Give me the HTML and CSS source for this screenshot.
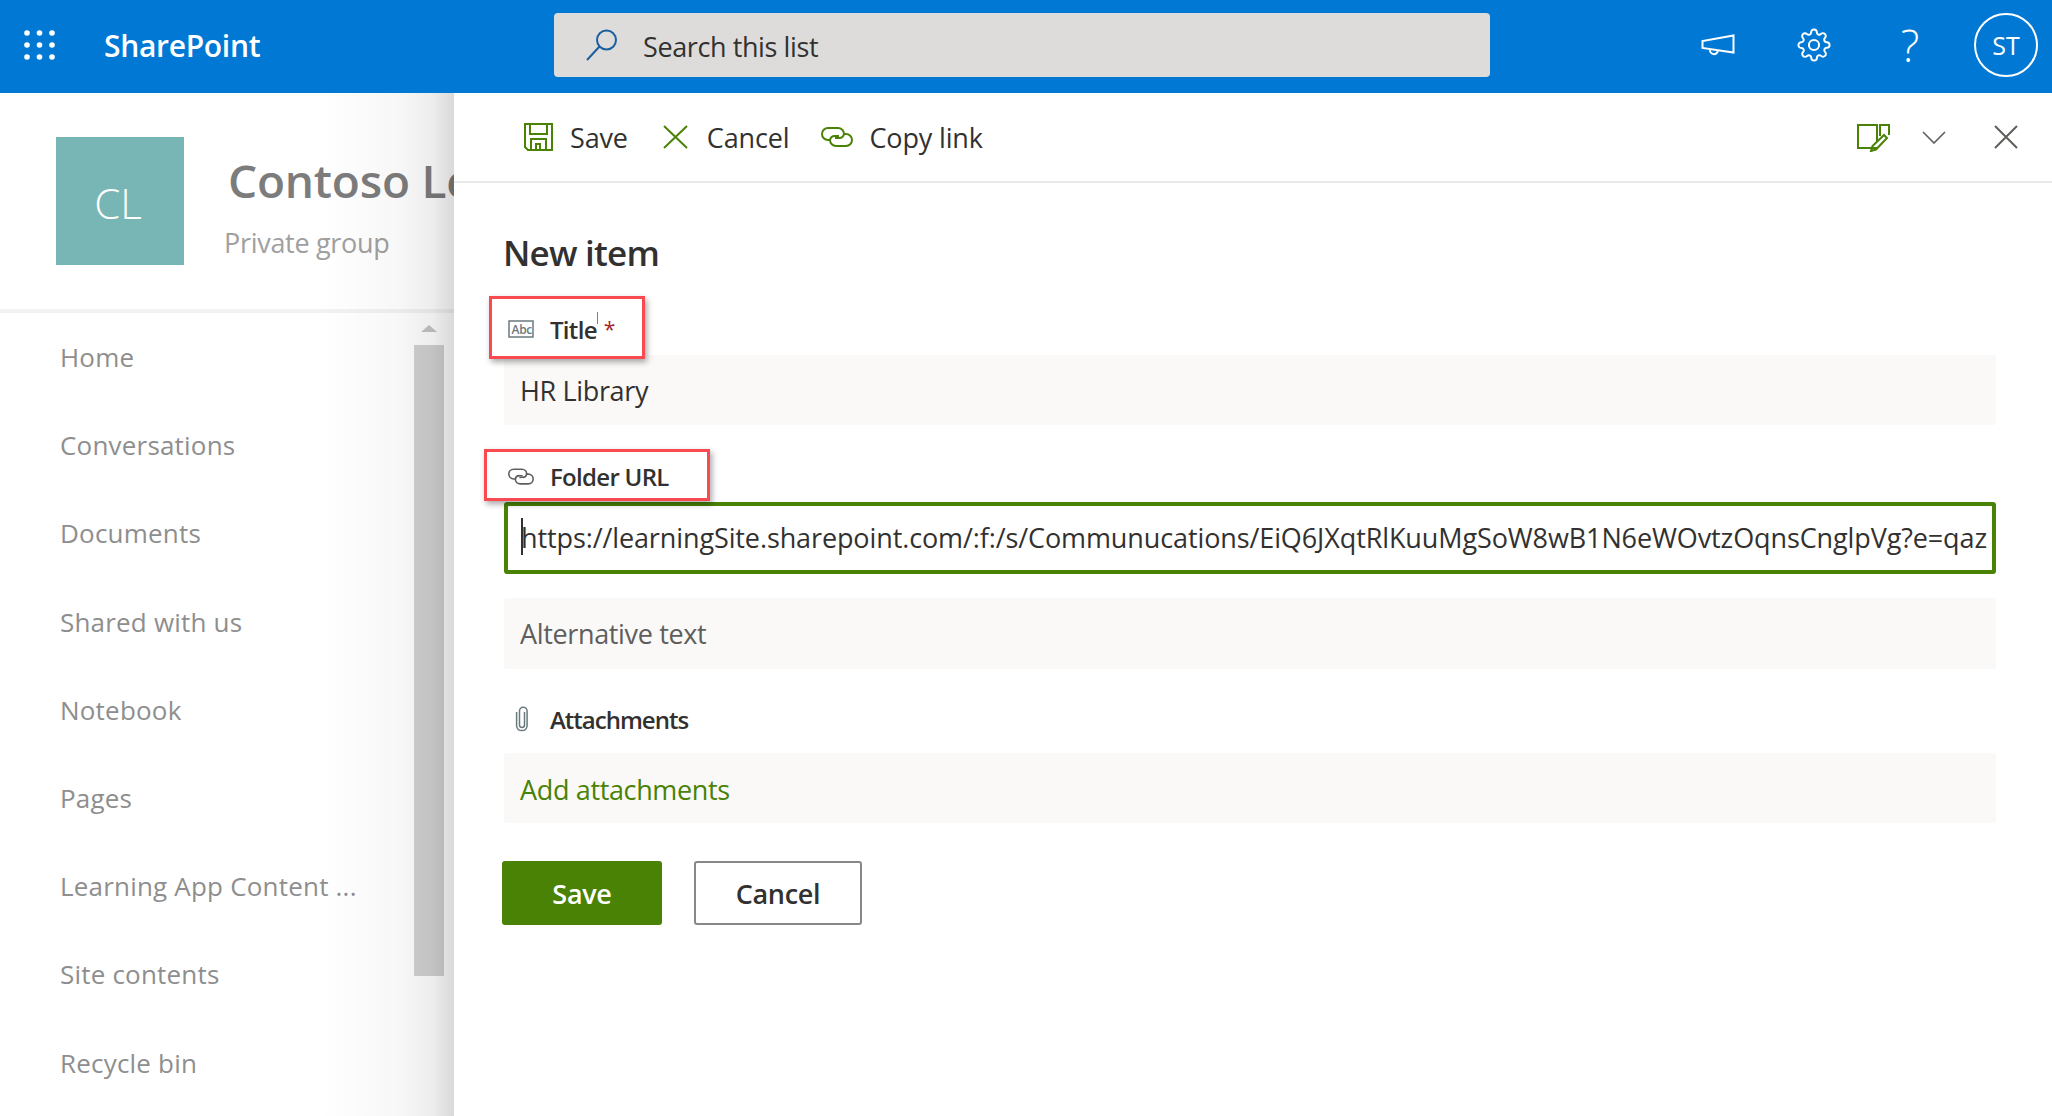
FILE: index.html
```html
<!DOCTYPE html>
<html lang="en">
<head>
    <meta charset="UTF-8">
    <title>New item - SharePoint</title>
    <link rel="stylesheet" href="styles.css">
</head>
<body>
    <header class="topbar">
        <svg class="waffle" width="31" height="30" viewBox="0 0 31 30" fill="#fff">
            <circle cx="3" cy="3" r="2.8"/><circle cx="15.5" cy="3" r="2.8"/><circle cx="28" cy="3" r="2.8"/>
            <circle cx="3" cy="15" r="2.8"/><circle cx="15.5" cy="15" r="2.8"/><circle cx="28" cy="15" r="2.8"/>
            <circle cx="3" cy="27" r="2.8"/><circle cx="15.5" cy="27" r="2.8"/><circle cx="28" cy="27" r="2.8"/>
        </svg>
        <div class="brand">SharePoint</div>
        <div class="search">
            <svg width="32" height="32" viewBox="0 0 32 32" fill="none" stroke="#1a5f9e" stroke-width="2">
                <circle cx="20.5" cy="11" r="9.5"/>
                <path d="M13.5 17.5 1 31"/>
            </svg>
            <span class="search-text">Search this list</span>
        </div>
        <div class="top-actions">
            <svg class="top-icon" width="34" height="22" viewBox="0 0 34 22" fill="none" stroke="#fff" stroke-width="2">
                <path d="M32.5 1.5v17L1.5 14V7z"/>
                <path d="M9 15.5a4 4 0 0 0 8 1.2"/>
            </svg>
            <svg class="top-icon gear" width="34" height="34" viewBox="0 0 24 24" fill="none" stroke="#fff" stroke-width="1.4">
                <circle cx="12" cy="12" r="3.6"/>
                <path d="M19.4 15a1.65 1.65 0 0 0 .33 1.82l.06.06a2 2 0 0 1 0 2.83 2 2 0 0 1-2.83 0l-.06-.06a1.65 1.65 0 0 0-1.82-.33 1.65 1.65 0 0 0-1 1.51V21a2 2 0 0 1-2 2 2 2 0 0 1-2-2v-.09A1.65 1.65 0 0 0 9 19.4a1.65 1.65 0 0 0-1.82.33l-.06.06a2 2 0 0 1-2.83 0 2 2 0 0 1 0-2.83l.06-.06a1.65 1.65 0 0 0 .33-1.82 1.65 1.65 0 0 0-1.51-1H3a2 2 0 0 1-2-2 2 2 0 0 1 2-2h.09A1.65 1.65 0 0 0 4.6 9a1.65 1.65 0 0 0-.33-1.82l-.06-.06a2 2 0 0 1 0-2.83 2 2 0 0 1 2.83 0l.06.06a1.65 1.65 0 0 0 1.82.33H9a1.65 1.65 0 0 0 1-1.51V3a2 2 0 0 1 2-2 2 2 0 0 1 2 2v.09a1.65 1.65 0 0 0 1 1.51 1.65 1.65 0 0 0 1.82-.33l.06-.06a2 2 0 0 1 2.83 0 2 2 0 0 1 0 2.83l-.06.06a1.65 1.65 0 0 0-.33 1.82V9a1.65 1.65 0 0 0 1.51 1H21a2 2 0 0 1 2 2 2 2 0 0 1-2 2h-.09a1.65 1.65 0 0 0-1.51 1z"/>
            </svg>
            <span class="help">?</span>
            <div class="avatar">ST</div>
        </div>
    </header>

    <main class="layout">
        <aside class="site">
            <div class="site-head">
                <div class="site-logo">CL</div>
                <div class="site-info">
                    <div class="site-name">Contoso Le</div>
                    <div class="site-type">Private group</div>
                </div>
            </div>
            <div class="nav-row">
                <ul class="nav">
                    <li>Home</li>
                    <li>Conversations</li>
                    <li>Documents</li>
                    <li>Shared with us</li>
                    <li>Notebook</li>
                    <li>Pages</li>
                    <li>Learning App Content ...</li>
                    <li>Site contents</li>
                    <li>Recycle bin</li>
                </ul>
                <div class="scrollbar">
                    <div class="scroll-up"></div>
                    <div class="scroll-thumb"></div>
                </div>
            </div>
        </aside>

        <section class="panel">
            <div class="commands">
                <div class="cmd cmd-save">
                    <svg width="29" height="28" viewBox="0 0 29 28" fill="none" stroke="#498205" stroke-width="2">
                        <path d="M1 1h27v26H4l-3-3z"/>
                        <path d="M6 1v10h17V1"/>
                        <path d="M7 27V16h15v11"/>
                        <path d="M12 27v-6h4v6"/>
                    </svg>
                    <span>Save</span>
                </div>
                <div class="cmd cmd-cancel">
                    <svg width="25" height="24" viewBox="0 0 25 24" fill="none" stroke="#498205" stroke-width="2">
                        <path d="M1 1l23 22M24 1 1 23"/>
                    </svg>
                    <span>Cancel</span>
                </div>
                <div class="cmd cmd-link">
                    <svg width="32" height="20" viewBox="0 0 32 20" fill="none" stroke="#498205" stroke-width="2">
                        <path d="M10 13H7A6 6 0 0 1 7 1h10a6 6 0 0 1 6 6 5 5 0 0 1-5 4h-4"/>
                        <path d="M22 7h3a6 6 0 0 1 0 12H15a6 6 0 0 1-6-6 5 5 0 0 1 5-4h4"/>
                    </svg>
                    <span>Copy link</span>
                </div>
                <div class="cmd-right">
                    <svg class="edit-icon" width="33" height="28" viewBox="0 0 33 28" fill="none" stroke="#498205" stroke-width="2">
                        <path d="M20 24H1V1h19v16"/>
                        <path d="M23 12V1h9v10"/>
                        <path d="M14 27l1.500-5L27 11l3 3-11 11.500z"/>
                    </svg>
                    <svg width="24" height="13" viewBox="0 0 24 13" fill="none" stroke="#605e5c" stroke-width="1.600">
                        <path d="M1 1l11 11L23 1"/>
                    </svg>
                    <svg width="24" height="24" viewBox="0 0 24 24" fill="none" stroke="#605e5c" stroke-width="2">
                        <path d="M1 1l22 22M23 1 1 23"/>
                    </svg>
                </div>
            </div>

            <div class="form">
                <h1 class="form-title">New item</h1>

                <div class="field-label anno-title">
                    <svg class="label-icon" width="26" height="18" viewBox="0 0 26 18" fill="none">
                        <rect x="1" y="1" width="24" height="16" stroke="#69797e" stroke-width="1.500"/>
                        <text x="3.500" y="13.500" font-family="Open Sans, sans-serif" font-size="12" letter-spacing="-0.3" fill="#69797e">Abc</text>
                    </svg>
                    <span>Title</span><span class="required">*</span>
                    <i class="tick"></i>
                </div>
                <div class="input">HR Library</div>

                <div class="field-label anno-url">
                    <svg class="label-icon" width="26" height="17" viewBox="0 0 32 20" fill="none" stroke="#605e5c" stroke-width="2">
                        <path d="M10 13H7A6 6 0 0 1 7 1h10a6 6 0 0 1 6 6 5 5 0 0 1-5 4h-4"/>
                        <path d="M22 7h3a6 6 0 0 1 0 12H15a6 6 0 0 1-6-6 5 5 0 0 1 5-4h4"/>
                    </svg>
                    <span>Folder URL</span>
                </div>
                <div class="input input-focus">
                    <i class="caret"></i>https://learningSite.sharepoint.com/:f:/s/Communucations/EiQ6JXqtRlKuuMgSoW8wB1N6eWOvtzOqnsCnglpVg?e=qaz
                </div>

                <div class="input input-alt">Alternative text</div>

                <div class="field-label label-attach">
                    <span class="label-icon clip">
                        <svg width="14" height="26" viewBox="0 0 14 26" fill="none" stroke="#69797e" stroke-width="1.500">
                            <path d="M9.500 6v13a2.500 2.500 0 0 1-5 0V5a3.800 3.800 0 0 1 7.600 0v15a5.300 5.300 0 0 1-10.500 0V6"/>
                        </svg>
                    </span>
                    <span>Attachments</span>
                </div>
                <div class="input input-add">Add attachments</div>

                <div class="buttons">
                    <button class="btn btn-primary" type="button">Save</button>
                    <button class="btn btn-default" type="button">Cancel</button>
                </div>
            </div>
        </section>
    </main>
</body>
</html>
```

FILE: styles.css
```css
*, *::before, *::after {
    box-sizing: border-box;
}
html, body {
    height: 100%;
}
body {
    margin: 0;
    font-family: "Open Sans", sans-serif;
    background: #fff;
    color: #323130;
    overflow: hidden;
}

/* top bar */
.topbar {
    height: 93px;
    padding-bottom: 3px;
    background: #0078d4;
    display: flex;
    align-items: center;
    color: #fff;
}
.waffle {
    margin-left: 24px;
    flex: none;
}
.brand {
    width: 156px;
    margin-left: 49px;
    padding-top: 1px;
    font-size: 30px;
    font-weight: 600;
    letter-spacing: -0.3px;
    white-space: nowrap;
}
.search {
    width: 936px;
    height: 64px;
    margin-left: 294px;
    background: #dedcdb;
    border-radius: 4px;
    display: flex;
    align-items: center;
    padding-left: 32px;
    gap: 25px;
    color: #323130;
    font-size: 27px;
    letter-spacing: -0.4px;
}
.search-text {
    padding-top: 2px;
}
.top-actions {
    margin-left: auto;
    display: flex;
    align-items: center;
}
.top-icon {
    flex: none;
}
.gear {
    margin-left: 62px;
}
.help {
    width: 20px;
    margin-left: 69px;
    font-size: 44px;
    font-weight: 300;
    line-height: 60px;
    text-align: center;
}
.avatar {
    width: 64px;
    height: 64px;
    margin-left: 54px;
    margin-right: 14px;
    border: 2px solid #fff;
    border-radius: 50%;
    display: flex;
    align-items: center;
    justify-content: center;
    font-size: 25px;
}

.layout {
    display: flex;
    height: 1023px;
}

/* left site column */
.site {
    width: 454px;
    flex: none;
    position: relative;
    overflow: hidden;
}
.site::after {
    content: "";
    position: absolute;
    inset: 0;
    background: linear-gradient(90deg, rgba(0,0,0,0) 320px, rgba(0,0,0,0.03) 400px, rgba(0,0,0,0.07) 432px, rgba(0,0,0,0.15) 454px);
}
.site-head {
    height: 220px;
    padding: 44px 0 0 56px;
    border-bottom: 4px solid #f3f2f1;
    display: flex;
}
.site-logo {
    width: 128px;
    height: 128px;
    flex: none;
    padding: 2px 4px 0 0;
    background: #77b6b4;
    color: #fff;
    font-size: 42px;
    font-weight: 300;
    display: flex;
    align-items: center;
    justify-content: center;
}
.site-info {
    margin-left: 41px;
    white-space: nowrap;
}
.site-name {
    margin: 8px 0 0 3px;
    font-size: 46px;
    font-weight: 600;
    line-height: 70px;
    color: #7c7c7c;
    letter-spacing: -0.2px;
}
.site-type {
    margin: 6px 0 0 -1px;
    font-size: 27px;
    line-height: 44px;
    color: #a0a0a0;
    letter-spacing: -0.3px;
}
.nav-row {
    display: flex;
}
.nav {
    list-style: none;
    margin: 0;
    padding: 0 0 0 60px;
    width: 412px;
}
.nav li {
    height: 88.2px;
    line-height: 88.2px;
    font-size: 26px;
    color: #8e8e8e;
    letter-spacing: 0.2px;
    white-space: nowrap;
}
.scrollbar {
    width: 36px;
    padding-top: 12px;
}
.scroll-up {
    width: 0;
    margin-left: 9px;
    border-left: 8px solid transparent;
    border-right: 8px solid transparent;
    border-bottom: 7px solid #c4c4c4;
}
.scroll-thumb {
    width: 30px;
    height: 631px;
    margin: 13px 0 0 2px;
    background: #d2d2d2;
}

/* panel */
.panel {
    flex: 1;
    background: #fff;
}
.commands {
    height: 90px;
    border-bottom: 2px solid #e9e9e9;
    display: flex;
    align-items: center;
    font-size: 27px;
    letter-spacing: -0.15px;
}
.cmd {
    display: flex;
    align-items: center;
    white-space: nowrap;
}
.cmd-save {
    margin-left: 70px;
    gap: 17px;
}
.cmd-cancel {
    margin-left: 35px;
    gap: 19px;
}
.cmd-link {
    margin-left: 32px;
    gap: 16px;
}
.cmd-right {
    margin-left: auto;
    margin-right: 34px;
    display: flex;
    align-items: center;
    gap: 32px;
}
.cmd-right svg:last-child {
    margin-left: 16px;
}
.edit-icon {
    margin-top: 2px;
}
.form {
    padding: 45px 56px 0 50px;
}
.form-title {
    margin: 0 0 0 -1px;
    font-size: 35px;
    font-weight: 600;
    line-height: 50px;
    letter-spacing: -0.8px;
}
.field-label {
    position: relative;
    z-index: 1;
    height: 34px;
    padding: 0 0 2px 4px;
    margin-top: 35px;
    margin-bottom: 8px;
    display: flex;
    align-items: center;
    font-size: 24px;
    font-weight: 600;
    letter-spacing: -0.7px;
}
.label-icon {
    width: 26px;
    margin-right: 16px;
    flex: none;
}
.clip {
    display: flex;
    justify-content: center;
    padding-left: 2px;
}
.required {
    margin-left: 7px;
    color: #a4262c;
    font-size: 21px;
    font-weight: 400;
}
.tick {
    position: absolute;
    left: 93px;
    top: -1px;
    width: 1px;
    height: 12px;
    background: #f84a50;
}
/* red callout boxes drawn over the screenshot */
.anno-title::before,
.anno-url::before {
    content: "";
    position: absolute;
    z-index: -1;
    background: #fff;
    border: 3px solid #f84a50;
    box-shadow: 2px 3px 6px rgba(0,0,0,0.35);
}
.anno-title::before {
    left: -15px;
    top: -17px;
    width: 156px;
    height: 63px;
}
.anno-url::before {
    left: -20px;
    top: -11px;
    width: 226px;
    height: 52px;
}
.input {
    position: relative;
    height: 70px;
    padding-left: 16px;
    background: #faf9f8;
    border-radius: 3px;
    display: flex;
    align-items: center;
    font-size: 27px;
    letter-spacing: -0.35px;
    white-space: nowrap;
}
.input-focus {
    height: 72px;
    padding: 0 0 2px 13px;
    background: #fff;
    border: 4px solid #498205;
    letter-spacing: -0.11px;
    overflow: hidden;
}
.caret {
    position: absolute;
    left: 13px;
    top: 12px;
    width: 2px;
    height: 37px;
    background: #323130;
}
.input-alt {
    height: 71px;
    margin-top: 24px;
    color: #605e5c;
}
.label-attach {
    margin-top: 34px;
    margin-bottom: 16px;
    letter-spacing: -1px;
}
.input-add {
    padding-top: 2px;
    color: #498205;
}
.buttons {
    display: flex;
    gap: 32px;
    margin: 38px 0 0 -2px;
}
.btn {
    height: 64px;
    border-radius: 3px;
    font-family: inherit;
    font-size: 27px;
    font-weight: 600;
    letter-spacing: -0.3px;
    cursor: pointer;
}
.btn-primary {
    width: 160px;
    background: #498205;
    border: none;
    color: #fff;
}
.btn-default {
    width: 168px;
    background: #fff;
    border: 2px solid #8a8886;
    color: #323130;
}
```
